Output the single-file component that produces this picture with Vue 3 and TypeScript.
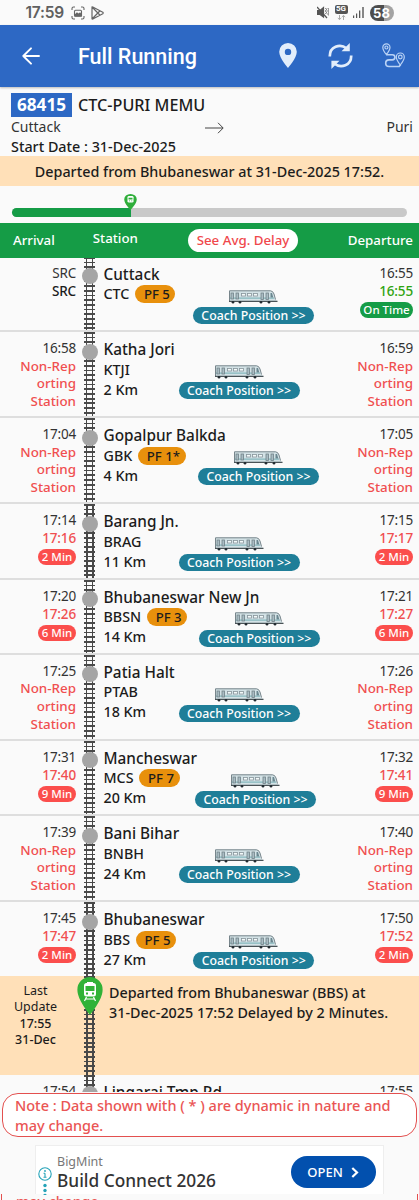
<script setup lang="ts">
interface Stop {
  name: string
  code: string
  pf?: string
  km?: string
  arr: string
  dep: string
  arrActual?: string
  depActual?: string
  arrBadge?: string
  depBadge?: string
  first?: boolean
}

const stops: Stop[] = [
  { name: 'Cuttack', code: 'CTC', pf: 'PF 5', arr: 'SRC', arrActual: 'SRC', dep: '16:55', depActual: '16:55', depBadge: 'On Time', first: true },
  { name: 'Katha Jori', code: 'KTJI', km: '2 Km', arr: '16:58', dep: '16:59' },
  { name: 'Gopalpur Balkda', code: 'GBK', pf: 'PF 1*', km: '4 Km', arr: '17:04', dep: '17:05' },
  { name: 'Barang Jn.', code: 'BRAG', km: '11 Km', arr: '17:14', arrActual: '17:16', arrBadge: '2 Min', dep: '17:15', depActual: '17:17', depBadge: '2 Min' },
  { name: 'Bhubaneswar New Jn', code: 'BBSN', pf: 'PF 3', km: '14 Km', arr: '17:20', arrActual: '17:26', arrBadge: '6 Min', dep: '17:21', depActual: '17:27', depBadge: '6 Min' },
  { name: 'Patia Halt', code: 'PTAB', km: '18 Km', arr: '17:25', dep: '17:26' },
  { name: 'Mancheswar', code: 'MCS', pf: 'PF 7', km: '20 Km', arr: '17:31', arrActual: '17:40', arrBadge: '9 Min', dep: '17:32', depActual: '17:41', depBadge: '9 Min' },
  { name: 'Bani Bihar', code: 'BNBH', km: '24 Km', arr: '17:39', dep: '17:40' },
  { name: 'Bhubaneswar', code: 'BBS', pf: 'PF 5', km: '27 Km', arr: '17:45', arrActual: '17:47', arrBadge: '2 Min', dep: '17:50', depActual: '17:52', depBadge: '2 Min' },
]
const progress = 30
</script>

<template>
  <div class="screen">
    <div class="status">
      <span class="clock">17:59</span>
      <svg class="s-shot" width="14" height="14" viewBox="0 0 14 14" fill="none" stroke="#666" stroke-width="1.1">
        <path d="M1 4V2.5Q1 1 2.5 1H4M10 1h1.500Q13 1 13 2.500V4M13 10v1.500Q13 13 11.500 13H10M4 13H2.500Q1 13 1 11.500V10" />
        <rect x="3.500" y="4.200" width="7" height="6" rx="1" /><path d="M4 9l2-2 1.500 1.200L9 7l1.500 2v1H4z" fill="#666" />
      </svg>
      <svg class="s-play" width="13" height="14" viewBox="0 0 13 14" fill="none" stroke="#666" stroke-width="1.200" stroke-linejoin="round">
        <path d="M1 1.300Q.8.600 1.800 1L11.800 6.300Q12.600 7 11.800 7.700L1.800 13Q.8 13.400 1 12.500ZM1.500 1.500L8.800 9M1.500 12.500L8.800 5" />
      </svg>
      <span class="grow"></span>
      <svg class="s-mute" width="12" height="13" viewBox="0 0 12 13" fill="none" stroke="#555" stroke-width="1.200">
        <path d="M.5 4.500H3L6.500 1.500V11L3 8.500H.5Z" fill="#555" /><path d="M0 1L10 12" /><path d="M8.500 2l1 1.500-1 1.500 1 1.500-1 1.500M10.800 2l1 1.500-1 1.500 1 1.500-1 1.500 1 1.500" stroke-width=".9" />
      </svg>
      <div class="s-5g"><span>5G</span>
        <svg width="9" height="5" viewBox="0 0 9 5" fill="none" stroke="#aaa" stroke-width="1"><path d="M2.500 0v4.500M.8 3l1.700 1.500L4.200 3M6.500 5V.5M4.800 2L6.500.5 8.200 2" /></svg>
      </div>
      <svg class="s-sig" width="11" height="11" viewBox="0 0 11 11" fill="#555"><path d="M0 8.500h1.200V11H0zM3 6.500h1.200V11H3zM6 3.500h1.300V11H6zM9.300 0h1.400v11H9.300z" /></svg>
      <span class="battery">58</span>
    </div>

    <header class="appbar">
      <svg class="back" width="18" height="18" viewBox="0 0 18 18" fill="none" stroke="#fff" stroke-width="1.900" stroke-linecap="round" stroke-linejoin="round"><path d="M17 9H1.300M9 1.300L1.300 9 9 16.700" /></svg>
      <h1>Full Running</h1>
      <svg class="pin" width="18" height="25" viewBox="0 0 18 25" fill="#e2edfb"><path fill-rule="evenodd" d="M9 0a8.800 8.800 0 0 0-8.800 8.800C.2 15.200 9 25 9 25s8.800-9.800 8.800-16.200A8.800 8.800 0 0 0 9 0zm0 5.700a3.200 3.200 0 1 1 0 6.400 3.200 3.200 0 0 1 0-6.400z" /></svg>
      <svg class="sync" width="25" height="26" viewBox="0 0 25 26" fill="none" stroke="#e2edfb" stroke-width="2.700">
        <path d="M1.800 13.500C1.500 3.500 12 .2 18.500 5.200M23.200 12.500C23.500 22.500 13 25.800 6.500 20.800" />
        <path d="M21.800 0V8.300H13.500ZM3.400 26V17.700H11.500Z" fill="#e2edfb" stroke="none" />
      </svg>
      <svg class="route" width="23" height="25" viewBox="0 0 23 25" fill="none" stroke="#b9d2f5" stroke-width="1.200">
        <path d="M4.300 11.500Q.8 7 .8 4.400a3.600 3.600 0 0 1 7.200 0Q8 7 4.300 11.500Z" /><circle cx="4.400" cy="4.500" r="1.500" />
        <path d="M18.300 22Q14.300 16.800 14.300 14a4 4 0 0 1 8 0Q22.300 16.800 18.300 22Z" /><circle cx="18.300" cy="14" r="1.800" />
        <path d="M4.300 11.700h6a2.600 2.600 0 0 1 0 5.200H7a3.300 3.300 0 0 0 0 6.600h10.200l1.500-2" stroke-width="1.600" />
      </svg>
    </header>

    <section class="summary">
      <div class="train"><span class="number">68415</span><span class="tname">CTC-PURI MEMU</span></div>
      <div class="ends"><span>Cuttack</span>
        <svg width="19" height="12" viewBox="0 0 19 12" fill="none" stroke="#444" stroke-width="1"><path d="M0 6h18M13 .8L18.200 6 13 11.200" /></svg>
        <span>Puri</span></div>
      <div class="start">Start Date : 31-Dec-2025</div>
    </section>
    <div class="banner">Departed from Bhubaneswar at 31-Dec-2025 17:52.</div>

    <div class="progress">
      <div class="bar"><div class="fill" :style="{ width: progress + '%' }">
        <svg class="marker" width="13" height="16" viewBox="0 0 26 38" preserveAspectRatio="none"><path d="M13 0A12.500 12.500 0 0 0 .5 13C.5 23 13 38 13 38S25.500 23 25.500 13A12.500 12.500 0 0 0 13 0Z" fill="#2fae3a" /><rect x="7" y="5" width="12" height="15" rx="3" fill="#fff" /><path d="M9 9h8v4H9zM10 15.500h2v2h-2zM14.500 15.500h2v2h-2z" fill="#2fae3a" /></svg>
      </div></div>
    </div>

    <div class="thead"><span class="h-arr">Arrival</span><span class="h-st">Station</span><span class="avg">See Avg. Delay</span><span class="h-dep">Departure</span></div>

    <div v-for="s in stops" :key="s.code" class="row" :class="{ tall: !s.depActual, first: s.first }">
      <div class="times arr">
        <div class="sched">{{ s.arr }}</div>
        <template v-if="s.arrActual"><div :class="s.first ? 'src' : 'late'">{{ s.arrActual }}</div><span v-if="s.arrBadge" class="badge">{{ s.arrBadge }}</span></template>
        <div v-else class="non">Non-Rep<br>orting<br>Station</div>
      </div>
      <div class="track"><i class="dot"></i></div>
      <div class="body">
        <div class="name">{{ s.name }}</div>
        <div class="detail">
          <div class="codes">
            <div class="code">{{ s.code }}<span v-if="s.pf" class="pf">{{ s.pf }}</span></div>
            <div v-if="s.km" class="code km">{{ s.km }}</div>
          </div>
          <div class="coach">
            <svg width="49" height="14" viewBox="0 0 49 14">
              <path d="M.5.500H41.500Q44 .8 45 4L46.500 9.500 48.500 11.500H.5Z" fill="#d3e2e6" />
              <path d="M.5 12V.8H41.500Q44 1 45 4L46.500 9.500" fill="none" stroke="#77858b" stroke-width="1" />
              <path d="M1 8.200h44" stroke="#86b7bd" stroke-width="1.200" />
              <path d="M0 11.300h48.500" stroke="#4a5357" stroke-width="1.300" />
              <g fill="#f4fafa" stroke="#87949b" stroke-width=".8"><rect x="12.500" y="3.500" width="4" height="2.500" /><rect x="18.500" y="3.500" width="4" height="2.500" /><rect x="24.500" y="3.500" width="4" height="2.500" /></g>
              <g fill="#a9bcc3" stroke="#718087" stroke-width=".8"><rect x="2" y="3" width="2.500" height="6" /><rect x="7" y="3" width="2.500" height="6" /><rect x="32" y="3" width="2.500" height="6.500" /><rect x="37" y="3" width="2.500" height="6.500" /></g>
              <path d="M41.500 3H43L44.300 7.500h-2.800Z" fill="#6b8790" />
              <g fill="#222b30"><circle cx="4" cy="12.300" r="1.300" /><circle cx="11" cy="12.300" r="1.300" /><circle cx="32" cy="12.300" r="1.300" /><circle cx="40" cy="12.300" r="1.300" /></g>
            </svg>
            <span class="cbtn">Coach Position &gt;&gt;</span>
          </div>
        </div>
      </div>
      <div class="times dep">
        <div class="sched">{{ s.dep }}</div>
        <template v-if="s.depActual"><div :class="s.first ? 'ontime' : 'late'">{{ s.depActual }}</div><span class="badge" :class="{ ok: s.first }">{{ s.depBadge }}</span></template>
        <div v-else class="non">Non-Rep<br>orting<br>Station</div>
      </div>
    </div>

    <div class="row update">
      <div class="last">Last<br>Update<br><b>17:55<br>31-Dec</b></div>
      <div class="track">
        <svg class="bigpin" width="26" height="38" viewBox="0 0 26 38"><path d="M13 0A12.500 12.500 0 0 0 .4 13C.4 23 13 38 13 38S25.600 23 25.600 13A12.500 12.500 0 0 0 13 0Z" fill="#31b237" /><path fill-rule="evenodd" d="M9.500 6h7q2.500 0 2.500 2.500v8.500q0 2.500-2.500 2.500h-7Q7 19.500 7 17V8.500Q7 6 9.500 6zM8.500 9v5h9V9zM9 15.500v2h2v-2zM15 15.500v2h2v-2z" fill="#fff" /><path d="M10 5.500h6M9.500 20L7.500 24M16.500 20l2 4M9 22h8" stroke="#fff" stroke-width="1.200" /></svg>
      </div>
      <div class="msg">Departed from Bhubaneswar (BBS) at<br>31-Dec-2025 17:52 Delayed by 2 Minutes.</div>
    </div>

    <div class="row peek">
      <div class="times arr"><div class="sched">17:54</div></div>
      <div class="track"><i class="dot"></i></div>
      <div class="body"><div class="name">Lingaraj Tmp Rd</div></div>
      <div class="times dep"><div class="sched">17:55</div></div>
    </div>

    <div class="note">Note : Data shown with ( * ) are dynamic in nature and may change.</div>

    <footer class="foot">
      <div class="ad">
        <div class="adicon">
          <svg width="14" height="32" viewBox="0 0 14 32" fill="none" stroke="#25a3b8"><circle cx="7" cy="7" r="6.200" stroke-width="1.100" /><path d="M7 6.200v4M5.500 6.200H7M5.500 10.200h3" stroke-width="1.100" /><circle cx="7" cy="4" r=".9" fill="#25a3b8" stroke="none" /><g fill="#25a3b8" stroke="none"><circle cx="7" cy="18.500" r="1.700" /><circle cx="7" cy="23.500" r="1.700" /><circle cx="7" cy="28.500" r="1.700" /></g></svg>
        </div>
        <div class="adtext"><div class="brand">BigMint</div><div class="title">Build Connect 2026</div></div>
        <div class="open">OPEN<svg width="8" height="11" viewBox="0 0 8 11" fill="none" stroke="#fff" stroke-width="2.200"><path d="M1.300 1l4.700 4.500L1.300 10" /></svg></div>
      </div>
      <div class="under"><span>may change.</span></div>
    </footer>
  </div>
</template>

<style>
body { background: #fafafa; }
</style>

<style scoped>
* { box-sizing: border-box; }
.screen { width: 419px; height: 1200px; overflow: hidden; background: #fafafa; font-family: "Noto Sans", "Open Sans", sans-serif; color: #1c1c1c; display: flex; flex-direction: column; font-size: 14px; font-weight: 500; white-space: nowrap; }
.screen > * { flex-shrink: 0; }
.status { height: 25px; display: flex; align-items: center; padding: 0 25.500px 0 25.500px; color: #606060; }
.clock { font: 600 15.500px/25px Inter, sans-serif; width: 45.500px; letter-spacing: -.2px; }
.s-play { margin-left: 6px; }
.grow { flex: 1; }
.s-5g { width: 13px; margin-left: 6px; display: flex; flex-direction: column; align-items: center; gap: 1px; }
.s-5g span { background: #555; color: #fff; border-radius: 2px; font: 700 8px/8.500px Roboto, sans-serif; width: 13px; text-align: center; }
.s-5g svg { display: block; }
.s-sig { margin-left: 5.500px; }
.battery { margin-left: 5.500px; width: 24px; height: 16px; border-radius: 8px; background: linear-gradient(90deg, #4d4d4d 58%, #a3a3a3 58%); color: #fff; font: 700 13px/16px Inter, sans-serif; text-align: center; }
.appbar { height: 61.500px; background: #2d68c4; display: flex; align-items: center; padding-left: 22px; box-shadow: 0 1px 2px #bbb; }
.appbar h1 { margin: 0 0 0 38px; width: 200.700px; color: #fff; font: 500 21.500px/30px Roboto, sans-serif; padding-top: 2px; }
.sync { margin-left: 31.500px; }
.route { margin-left: 28.500px; }
.summary { height: 70.500px; padding: 6px 6px 0 11px; }
.train { display: flex; height: 24px; align-items: center; }
.number { background: #2d68c4; color: #fff; font-weight: 700; font-size: 17.200px; line-height: 24px; width: 61px; text-align: center; }
.tname { font-size: 16.200px; margin-left: 6px; }
.ends { display: flex; justify-content: space-between; align-items: center; height: 20px; font-size: 14px; font-weight: 400; color: #333; line-height: 20px; }
.ends svg { position: relative; left: -9px; top: 1px; }
.start { font-size: 14.350px; line-height: 19px; }
.banner { height: 30px; margin-top: -1px; background: #ffe0b8; text-align: center; font-size: 14.350px; line-height: 31px; }
.progress { height: 37px; padding: 22px 12px 0; }
.bar { height: 9px; border-radius: 5px; background: #c9c9c9; }
.fill { height: 9px; background: #159c46; border-radius: 5px 0 0 5px; position: relative; }
.marker { position: absolute; right: -6px; top: -14.500px; }
.thead { height: 34.600px; background: #159c46; color: #fff; display: flex; align-items: center; padding: 0 6px 0 13px; font-size: 13.300px; position: relative; z-index: 1; }
.h-st { margin: -5px 0 0 38px; }
.avg { margin-left: auto; background: #fff; color: #f0484c; border-radius: 12px; width: 110px; height: 23px; line-height: 23px; text-align: center; }
.h-dep { width: 115px; text-align: right; }
.row { height: 75.300px; border-bottom: 2px solid #dedede; display: flex; padding-right: 6px; }
.row.tall { height: 86.050px; }
.row.first { margin-top: -.7px; }
.times { padding-top: 7px; line-height: 18px; font-size: 13.500px; text-align: right; flex: none; }
.arr { width: 76px; }
.dep { width: 82px; }
.sched { font-weight: 400; color: #333; letter-spacing: -.2px; }
.src { letter-spacing: -.2px; }
.late, .non { color: #f04f50; }
.late { letter-spacing: -.15px; }
.ontime { color: #2ea30f; letter-spacing: -.15px; }
.non { line-height: 17.900px; font-size: 13.400px; padding-top: .3px; }
.badge { display: block; width: 38px; height: 16px; margin: 2px 0 0 auto; border-radius: 8px; background: #fb4e4c; color: #fff; font-size: 11.500px; line-height: 16px; text-align: center; }
.badge.ok { background: #159c46; width: 53px; }
.track { flex: none; width: 11px; margin-left: 8px; position: relative; background: linear-gradient(90deg, transparent 1.800px, #484848 1.800px 3.500px, transparent 3.500px 7.800px, #484848 7.800px 9.500px, transparent 9.500px), repeating-linear-gradient(180deg, #4a4a4a 0 1.700px, transparent 1.700px 4.700px); }
.dot { position: absolute; left: -2.500px; top: 11.500px; width: 16px; height: 16px; border-radius: 50%; background: #a5a5a5; }
.body { flex: 1; min-width: 0; margin-left: 8.500px; }
.name { font-size: 15.350px; line-height: 20px; margin-top: 7px; }
.detail { display: flex; width: 228px; }
.codes { min-width: 43px; padding-top: .5px; }
.code { display: flex; align-items: center; height: 20px; font-size: 14.300px; line-height: 20px; }
.pf { background: #e8900c; border-radius: 9px; height: 18px; line-height: 18px; padding: 0 5.500px 0 9px; margin-left: 5.500px; font-size: 13.200px; }
.coach { flex: 1; display: flex; flex-direction: column; align-items: center; padding-top: 5.700px; }
.coach svg { display: block; flex: none; }
.cbtn { margin-top: 3.500px; width: 121px; height: 17px; border-radius: 9px; background: #1f7e98; color: #fff; font-size: 12.300px; line-height: 17px; text-align: center; }
.update { height: 98.800px; background: #ffe0b8; border: 0; margin-top: -1.600px; }
.last { width: 76px; padding: 7px 5px 0 0; font-size: 12.500px; line-height: 16.300px; text-align: center; font-weight: 400; }
.last b { font-weight: 500; }
.bigpin { position: absolute; left: -7.500px; top: 1px; }
.msg { margin-left: 14px; padding-top: 7px; font-size: 14.350px; line-height: 20px; }
.peek { height: 17px; overflow: hidden; border: 0; }
.note { height: 44px; margin: 1.500px 2px 0; border: 1.300px solid #e3504f; border-radius: 16px; background: #fff; color: #ea5554; font-size: 14.500px; line-height: 19.700px; padding: 2px 12px; white-space: normal; }
.foot { height: 70px; padding-top: 7.500px; display: flex; flex-direction: column; }
.under { height: 14px; flex: none; padding-left: 14px; margin: 0 1px; border: 1.300px solid #e3504f; border-width: 0 1.300px; color: #ea5554; font-size: 14.200px; line-height: 15px; }
.ad { flex: none; height: 49px; margin: 0 35px; background: #fff; border: 1px solid #eee; border-bottom: 0; display: flex; align-items: flex-start; }
.adicon { width: 21px; height: 49px; overflow: hidden; padding: 21px 0 0 2px; }
.brand { font-size: 12.500px; line-height: 16px; color: #777; font-weight: 400; margin-top: 8.500px; }
.title { font-size: 17.300px; line-height: 21px; color: #333; }
.adtext { flex: 1; }
.open { width: 85px; height: 32px; margin: 10.500px 7.500px 0 0; border-radius: 16px; background: #0250ae; color: #fff; font-size: 13px; display: flex; align-items: center; justify-content: center; gap: 8px; }
</style>
